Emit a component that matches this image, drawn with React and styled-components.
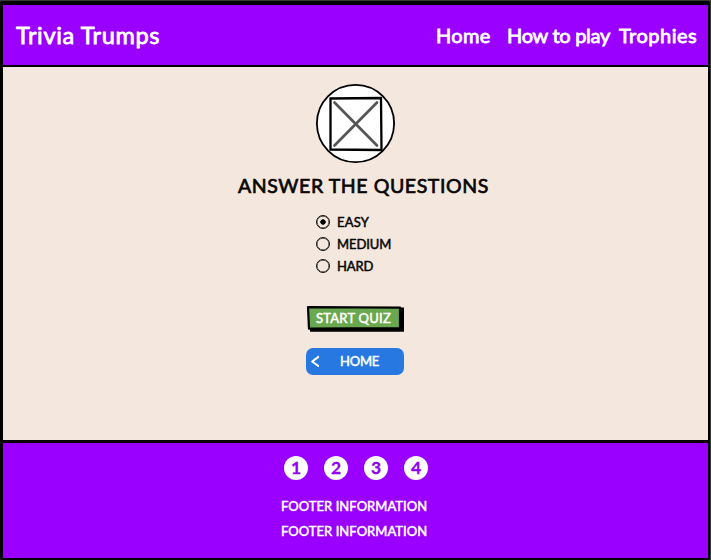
import React, { useState } from "react";
import styled, { createGlobalStyle } from "styled-components";

const GlobalStyle = createGlobalStyle`
  * { box-sizing: border-box; }
  body { margin: 0; background: #343a36; font-family: Lato, "Open Sans", sans-serif; }
  h1, p { margin: 0; }
`;

const Page = styled.div`
  display: flex;
  flex-direction: column;
  width: 710px;
  height: 559px;
  margin-top: 1px;
  overflow: hidden;
  border: solid #000;
  border-width: 4px 2px 2px 3px;
  border-radius: 2px;
  background: #f4e8de;
`;

const Label = styled.span`
  display: inline-block;
  width: ${(p) => p.$w}px;
  font-size: ${(p) => p.$size}px;
  line-height: 24px;
  font-weight: 400;
  -webkit-text-stroke: ${(p) => p.$stroke || 0.5}px currentColor;
  stroke-linejoin: round;
  letter-spacing: ${(p) => p.$track || 0}px;
  white-space: nowrap;
`;

const Header = styled.header`
  display: flex;
  justify-content: space-between;
  flex: 0 0 62px;
  padding: 18px 11px 0 13px;
  color: #fff;
  background: #9900ff;
  border-bottom: 2px solid #000;
`;

const Nav = styled.nav`
  display: flex;
`;

const Main = styled.main`
  display: flex;
  flex-direction: column;
  flex: 0 0 373px;
  padding-top: 17px;
  color: #080604;
`;

const Picture = styled.svg`
  width: 80px;
  height: 80px;
  margin-left: 312px;
`;

const Heading = styled.h1`
  display: flex;
  height: 24px;
  margin: 10px 0 0 235px;
`;

const Options = styled.div`
  display: grid;
  grid-auto-rows: 22px;
  margin: 13px 0 0 313px;
`;

const Option = styled.label`
  display: flex;
  align-items: center;
  gap: 7px;
`;

const Radio = styled.input`
  appearance: none;
  width: 14px;
  height: 14px;
  margin: 0 0 1px;
  border: 1.5px solid #111;
  border-radius: 50%;
  box-shadow: inset 0 0 0 0.4px #111;
  background: ${(p) => (p.checked ? "radial-gradient(circle, #000 2.4px, transparent 3px)" : "transparent")};
`;

const Actions = styled.div`
  display: flex;
  flex-direction: column;
  gap: 17px;
  margin: 29px 0 0 303px;
`;

const Button = styled.button`
  display: flex;
  align-items: center;
  padding: 0;
  border: 0;
  color: #fff;
  font-family: inherit;
`;

const StartButton = styled(Button)`
  position: relative;
  width: 99px;
  height: 25px;
  padding: 0 0 1px 10px;
  background: none;
`;

const StartShape = styled.svg`
  position: absolute;
  inset: 0;
`;

const StartLabel = styled(Label)`
  position: relative;
  text-align: left;
`;

const HomeButton = styled(Button)`
  width: 98px;
  height: 27px;
  padding: 0 0 1px 5px;
  gap: 21px;
  text-align: left;
  border-radius: 7px;
  background: #2878e2;
`;

const Footer = styled.footer`
  display: flex;
  flex-direction: column;
  flex: 1;
  padding-top: 13px;
  color: #fff;
  background: #9900ff;
  border-top: 3px solid #000;
`;

const Badges = styled.div`
  display: flex;
  gap: 16px;
  margin-left: 281px;
`;

const Badge = styled.span`
  display: flex;
  align-items: center;
  justify-content: center;
  width: 24px;
  height: 24px;
  border-radius: 50%;
  color: #9200f2;
  background: #fff;
  font-weight: 700;
  font-size: 17.5px;
  line-height: 24px;
  -webkit-text-stroke: 0.3px currentColor;
`;

const FooterText = styled.div`
  display: grid;
  grid-auto-rows: 25px;
  margin: 14px 0 0 278px;
`;

const levels = [
  { name: "EASY", width: 32, track: 0.2 },
  { name: "MEDIUM", width: 54, track: -0.1 },
  { name: "HARD", width: 36, track: -0.1 },
];

export default function App() {
  const [level, setLevel] = useState("EASY");
  return (
    <>
      <GlobalStyle />
      <Page>
        <Header>
          <Label $w={150} $size={23.5} $stroke={0.8} $track={0.63}>Trivia Trumps</Label>
          <Nav>
            <Label $w={71} $size={20} $stroke={0.8} $track={0.35}>Home</Label>
            <Label $w={112} $size={20} $stroke={0.8} $track={-0.28}>How to play</Label>
            <Label $w={78} $size={20} $stroke={0.8} $track={0.5}>Trophies</Label>
          </Nav>
        </Header>
        <Main>
          <Picture viewBox="0 0 80 80">
            <circle cx="40.5" cy="39.5" r="38.6" fill="#fff" stroke="#000" strokeWidth="1.8" />
            <path d="M15.5 14.5 L66 14 L66.5 66 L15.5 65.5 Z" fill="#fff" stroke="#000" strokeWidth="2.3" />
            <path d="M19.5 18.5 L62 61.5 M62 18.5 L19.5 61.5" stroke="#555" strokeWidth="2.7" strokeLinecap="round" />
          </Picture>
          <Heading><Label $w={256} $size={19.5} $stroke={0.7} $track={0.58}>ANSWER THE QUESTIONS</Label></Heading>
          <Options>
            {levels.map((l) => (
              <Option key={l.name}>
                <Radio type="radio" name="level" checked={level === l.name} onChange={() => setLevel(l.name)} />
                <Label $w={l.width} $size={13} $track={l.track}>{l.name}</Label>
              </Option>
            ))}
          </Options>
          <Actions>
            <StartButton>
              <StartShape width="99" height="26" viewBox="0 0 99 26">
                <path d="M4 1.5 L98 1.5 L98 25.7 L4 25.7 Z" fill="#000" />
                <path d="M2 1.2 L94 1.6 L94 22 L3 22.7 Z" fill="#6aa84f" stroke="#000" strokeWidth="2.2" strokeLinejoin="round" />
              </StartShape>
              <StartLabel $w={78} $size={13} $track={0.25}>START QUIZ</StartLabel>
            </StartButton>
            <HomeButton>
              <svg width="8" height="12" viewBox="0 0 8 12">
                <path d="M7.4 1.9 L1.2 6.5 L7.4 11" fill="none" stroke="#fff" strokeWidth="2.1" strokeLinecap="round" strokeLinejoin="round" />
              </svg>
              <Label $w={45} $size={13} $track={-0.2}>HOME</Label>
            </HomeButton>
          </Actions>
        </Main>
        <Footer>
          <Badges>{[1, 2, 3, 4].map((n) => <Badge key={n}>{n}</Badge>)}</Badges>
          <FooterText>
            <Label $w={150} $size={13} $track={0.05}>FOOTER INFORMATION</Label>
            <Label $w={150} $size={13} $track={0.05}>FOOTER INFORMATION</Label>
          </FooterText>
        </Footer>
      </Page>
    </>
  );
}
